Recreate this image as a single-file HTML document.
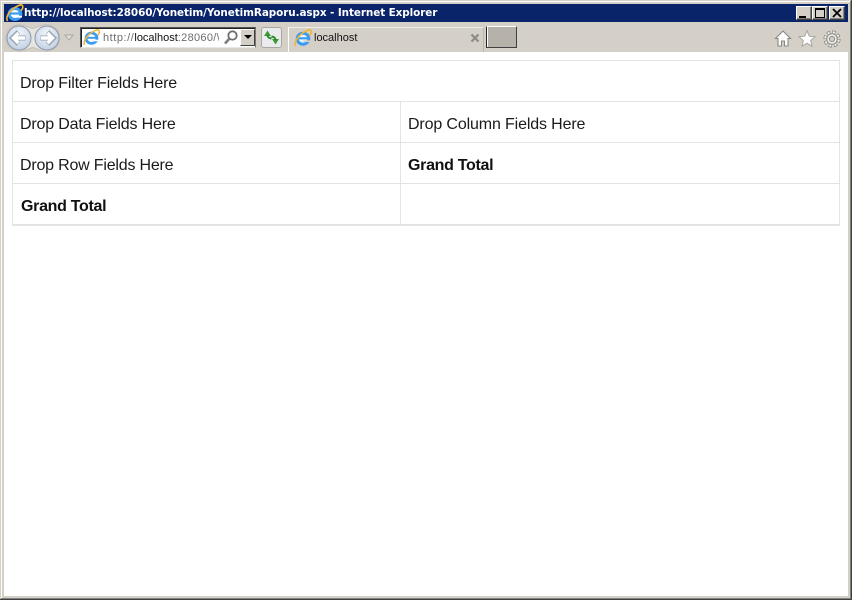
<!DOCTYPE html>
<html><head><meta charset="utf-8"><style>
html,body{margin:0;padding:0;width:852px;height:608px;overflow:hidden;background:#fff}
div,span,svg{position:absolute;display:block;box-sizing:border-box}
.t{white-space:nowrap;font-family:"Liberation Sans",sans-serif;font-size:16px;line-height:20px;color:#1a1a1a}
.b{font-weight:bold;color:#111}
.l{background:#e3e3e3}
.wb{width:16px;height:14px;top:6px;background:#d4d0c8;border-top:1px solid #fff;border-left:1px solid #fff;border-right:1px solid #404040;border-bottom:1px solid #404040;box-shadow:inset -1px -1px 0 #808080}
</style></head><body>
<div style="left:0;top:0;width:852px;height:600px;background:#d4d0c8"></div>
<div style="left:1px;top:1px;width:850px;height:1px;background:#fff"></div>
<div style="left:1px;top:1px;width:1px;height:598px;background:#fff"></div>
<div style="left:850px;top:1px;width:1px;height:598px;background:#808080"></div>
<div style="left:851px;top:0;width:1px;height:600px;background:#404040"></div>
<div style="left:1px;top:598px;width:850px;height:1px;background:#808080"></div>
<div style="left:0;top:599px;width:852px;height:1px;background:#404040"></div>
<div style="left:4px;top:4px;width:844px;height:18px;background:#0a246a"></div>
<svg style="left:5px;top:4px" width="19" height="18" viewBox="0 0 18 18"><ellipse cx="9.500" cy="10" rx="5.800" ry="5.500" fill="#fff" stroke="#3a9cf0" stroke-width="3"/><path d="M4 9.500h11" stroke="#3a9cf0" stroke-width="2.200"/><path d="M2 17C-1 11 8 3 15 .8c3 0 3 3 .5 6" fill="none" stroke="#f2b632" stroke-width="1.600"/><rect x="9.500" y="11.800" width="7" height="1.800" fill="#fff"/></svg>
<div class="t" style="left:24px;top:4px;height:18px;line-height:18px;font-family:'DejaVu Sans',sans-serif;font-weight:bold;font-size:10.4px;color:#fff;letter-spacing:-.07px">http://localhost:28060/Yonetim/YonetimRaporu.aspx - Internet Explorer</div>
<div class="wb" style="left:796px"></div><div style="left:799px;top:16px;width:7px;height:2px;background:#000"></div>
<div class="wb" style="left:812px"></div><div style="left:815px;top:8px;width:10px;height:10px;border:1px solid #000;border-top-width:2px"></div>
<div class="wb" style="left:829px"></div><svg style="left:832px;top:8px" width="10" height="10" viewBox="0 0 10 10"><path d="M1 1l8 8M9 1l-8 8" stroke="#000" stroke-width="1.800"/></svg>

<svg style="left:5px;top:24px" width="80" height="28" viewBox="0 0 80 28">
<defs><radialGradient id="g" cx=".5" cy=".35" r=".7"><stop offset="0" stop-color="#f6f8fb"/><stop offset="1" stop-color="#bccde2"/></radialGradient></defs>
<path d="M14 .8c6 0 9 2.700 13.500 3.700c5-1 8-3.700 14-3.700a13.200 13.200 0 0 1 0 26.400c-6 0-9-2.700-14-3.700c-4.500 1-7.500 3.700-13.500 3.700a13.200 13.200 0 0 1 0-26.400z" fill="#e6e4df" stroke="#c2c0bb"/>
<circle cx="14" cy="14" r="12" fill="url(#g)" stroke="#8f99a6"/><circle cx="42" cy="14" r="12" fill="url(#g)" stroke="#8f99a6"/>
<path d="M7.500 14h13M13.500 8L7.500 14l6 6" fill="none" stroke="#9ba8b8" stroke-width="5.200"/><path d="M35.500 14h13M42.500 8l6 6-6 6" fill="none" stroke="#9ba8b8" stroke-width="5.200"/>
<path d="M8.500 14h11.500M13.500 9L8.500 14l5 5" fill="none" stroke="#fff" stroke-width="3.400"/><path d="M36 14h11.500M42.500 9l5 5-5 5" fill="none" stroke="#fff" stroke-width="3.400"/>
<path d="M60 11h8l-4 5z" fill="#e4e2dc" stroke="#a9a7a1"/></svg>

<div style="left:80px;top:27px;width:176px;height:21px;background:#fff;border:1px solid #555;border-right-color:#777;border-bottom-color:#e8e6e0;box-shadow:inset 1px 1px 0 #222"></div>
<svg style="left:83px;top:29px" width="17" height="17" viewBox="0 0 17 17"><ellipse cx="8.500" cy="9.200" rx="5.500" ry="5.200" fill="#fff" stroke="#3a9cf0" stroke-width="2.800"/><path d="M4 8.800h10" stroke="#3a9cf0" stroke-width="2"/><path d="M1.500 16C-.5 11 7 3 14 .8c3 0 3 3 .7 5.500" fill="none" stroke="#f2b632" stroke-width="1.500"/><rect x="9" y="10.700" width="7" height="1.600" fill="#fff"/></svg>
<div class="t" style="left:103px;top:28px;width:116px;overflow:hidden;font-size:11px;color:#6d6d6d"><span style="position:static;display:inline;letter-spacing:.55px">http://</span><span style="position:static;display:inline;color:#111">localhost</span><span style="position:static;display:inline;letter-spacing:.3px">:28060/\</span></div>
<svg style="left:223px;top:29px" width="16" height="16" viewBox="0 0 16 16"><circle cx="9.500" cy="6.500" r="4.200" fill="#fff" stroke="#6f6f6f" stroke-width="1.800"/><path d="M6.300 9.700L2 14.500" stroke="#7e7e7e" stroke-width="2.600"/></svg>
<div style="left:240px;top:29px;width:15px;height:17px;background:#d4d0c8;border:1px solid #404040;border-top-color:#fff;border-left-color:#fff"></div>
<div style="left:244px;top:35px;width:0;height:0;border:4px solid transparent;border-top:4px solid #000;border-bottom:0"></div>
<div style="left:261px;top:27px;width:21px;height:21px;border:1px solid #aaa7a1;border-radius:3px;background:#e9ebee"></div>
<svg style="left:263px;top:29px" width="17" height="17" viewBox="0 0 17 17"><path d="M4.500 1.500L8 7H1z" fill="#3c9a36"/><path d="M4.500 6C4.800 9 6.500 9 8.500 9.500" fill="none" stroke="#2a8a28" stroke-width="2"/><path d="M12.500 15.500L9 10h7z" fill="#3c9a36"/><path d="M12.500 11C12.200 8 10.500 8 8.500 7.500" fill="none" stroke="#2a8a28" stroke-width="2"/></svg>

<div style="left:288px;top:27px;width:196px;height:25px;border-left:1px solid #fff;border-top:1px solid #efede8;border-right:1px solid #bbb8b0;background:#d4d0c8"></div>
<svg style="left:294px;top:29px" width="18" height="18" viewBox="0 0 17 17"><ellipse cx="8.500" cy="9.200" rx="5.500" ry="5.200" fill="#e8f2fb" stroke="#3a9cf0" stroke-width="2.800"/><path d="M4 8.800h10" stroke="#3a9cf0" stroke-width="2"/><path d="M1.500 16C-.5 11 7 3 14 .8c3 0 3 3 .7 5.500" fill="none" stroke="#f2b632" stroke-width="1.500"/><rect x="9" y="10.700" width="7" height="1.600" fill="#d4d0c8"/></svg>
<div class="t" style="left:314px;top:28px;font-size:11px;color:#111">localhost</div>
<svg style="left:470px;top:33px" width="10" height="10" viewBox="0 0 10 10"><path d="M1.500 1.500l7 7M8.500 1.500l-7 7" stroke="#8d8b86" stroke-width="2.200"/></svg>
<div style="left:486px;top:26px;width:31px;height:22px;background:#b6b2a9;border:1px solid #404040;border-top-color:#fff;border-left-color:#222;box-shadow:inset 1px 0 0 #fff"></div>

<svg style="left:774px;top:29px" width="68" height="20" viewBox="0 0 68 20">
<path d="M9 2L1.500 9.500H4V17h3.500v-5h3v5H14V9.500h2.500z" fill="#fff" stroke="#8b8985" stroke-width="1.100"/>
<path d="M33 1.800l2.300 5.400 5.800.5-4.400 3.800 1.300 5.700-5-3-5 3 1.300-5.700-4.400-3.800 5.800-.5z" fill="#fff" stroke="#a8a6a1"/>
<circle cx="58" cy="10" r="6.800" fill="none" stroke="#8b8985" stroke-width="3.600" stroke-dasharray="3.300 2.040"/>
<circle cx="58" cy="10" r="5.200" fill="#f4f3ef" stroke="#8b8985" stroke-width="1"/>
<circle cx="58" cy="10" r="6.800" fill="none" stroke="#f4f3ef" stroke-width="2" stroke-dasharray="2 3.340" stroke-dashoffset="-.65"/>
<circle cx="58" cy="10" r="2.600" fill="#d4d0c8" stroke="#8b8985" stroke-width="1"/></svg>

<div style="left:4px;top:52px;width:844px;height:544px;background:#fff"></div>
<div class="l" style="left:12px;top:60px;width:828px;height:1px"></div>
<div class="l" style="left:12px;top:101px;width:828px;height:1px"></div>
<div class="l" style="left:12px;top:142px;width:828px;height:1px"></div>
<div class="l" style="left:12px;top:183px;width:828px;height:1px"></div>
<div class="l" style="left:12px;top:224px;width:828px;height:2px"></div>
<div class="l" style="left:12px;top:60px;width:1px;height:165px"></div>
<div class="l" style="left:400px;top:101px;width:1px;height:124px"></div>
<div class="l" style="left:839px;top:60px;width:1px;height:165px"></div>
<div class="t" style="left:20px;top:73.500px;letter-spacing:-.17px">Drop Filter Fields Here</div>
<div class="t" style="left:20px;top:115px;letter-spacing:-.17px">Drop Data Fields Here</div>
<div class="t" style="left:408px;top:115px;letter-spacing:-.14px">Drop Column Fields Here</div>
<div class="t" style="left:20px;top:156px;letter-spacing:-.2px">Drop Row Fields Here</div>
<div class="t b" style="left:408px;top:156px;letter-spacing:-.3px">Grand Total</div>
<div class="t b" style="left:21px;top:197px;letter-spacing:-.3px">Grand Total</div>
</body></html>
